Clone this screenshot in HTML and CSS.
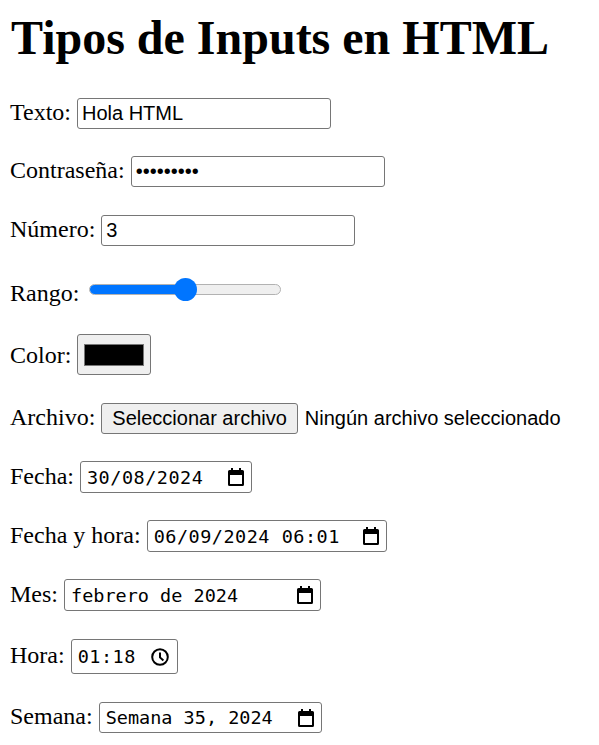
FILE: index.html
```html
<!DOCTYPE html>
<html lang="es">
<head>
<meta charset="utf-8">
<title>Tipos de Inputs en HTML</title>
<link rel="stylesheet" href="styles.css">
</head>
<body>
<h1>Tipos de Inputs en HTML</h1>

<div class="row r-texto">
  <span class="label">Texto:</span>
  <span class="field text">Hola HTML</span>
</div>

<div class="row r-pass">
  <span class="label">Contraseña:</span>
  <span class="field text pass">•••••••••</span>
</div>

<div class="row r-num">
  <span class="label">Número:</span>
  <span class="field text">3</span>
</div>

<div class="row r-range">
  <span class="label">Rango:</span>
  <span class="range"><span class="track"><span class="fill"></span></span><span class="thumb"></span></span>
</div>

<div class="row r-color">
  <span class="label">Color:</span>
  <span class="color"><span class="swatch"></span></span>
</div>

<div class="row r-file">
  <span class="label">Archivo:</span>
  <span class="filebtn">Seleccionar archivo</span>
  <span class="filename">Ningún archivo seleccionado</span>
</div>

<div class="row r-date">
  <span class="label">Fecha:</span>
  <span class="field dt w-date"><span class="val digits">30/08/2024</span>
    <svg class="cal" width="16" height="18" viewBox="0 0 16 18"><path fill-rule="evenodd" d="M3 0h2v2h6V0h2v2h1.5A1.5 1.5 0 0 1 16 3.5v13a1.5 1.5 0 0 1-1.5 1.5h-13A1.5 1.5 0 0 1 0 16.5v-13A1.5 1.5 0 0 1 1.5 2H3zM2 7v9h12V7z"/></svg></span>
</div>

<div class="row r-dtl">
  <span class="label">Fecha y hora:</span>
  <span class="field dt w-dtl"><span class="val digits">06/09/2024 06:01</span>
    <svg class="cal" width="16" height="18" viewBox="0 0 16 18"><path fill-rule="evenodd" d="M3 0h2v2h6V0h2v2h1.5A1.5 1.5 0 0 1 16 3.5v13a1.5 1.5 0 0 1-1.5 1.5h-13A1.5 1.5 0 0 1 0 16.5v-13A1.5 1.5 0 0 1 1.5 2H3zM2 7v9h12V7z"/></svg></span>
</div>

<div class="row r-month">
  <span class="label">Mes:</span>
  <span class="field dt w-month"><span class="val">febrero de 2024</span>
    <svg class="cal" width="16" height="18" viewBox="0 0 16 18"><path fill-rule="evenodd" d="M3 0h2v2h6V0h2v2h1.5A1.5 1.5 0 0 1 16 3.5v13a1.5 1.5 0 0 1-1.5 1.5h-13A1.5 1.5 0 0 1 0 16.5v-13A1.5 1.5 0 0 1 1.5 2H3zM2 7v9h12V7z"/></svg></span>
</div>

<div class="row r-time">
  <span class="label">Hora:</span>
  <span class="field dt w-time"><span class="val digits">01:18</span>
    <svg class="clock" width="18" height="18" viewBox="0 0 18 18"><circle cx="9" cy="9" r="7.8" fill="none" stroke="#000" stroke-width="2"/><path d="M9 4.5V9.4l3.4 3.2" fill="none" stroke="#000" stroke-width="2"/></svg></span>
</div>

<div class="row r-week">
  <span class="label">Semana:</span>
  <span class="field dt w-week"><span class="val">Semana 35, 2024</span>
    <svg class="cal" width="16" height="18" viewBox="0 0 16 18"><path fill-rule="evenodd" d="M3 0h2v2h6V0h2v2h1.5A1.5 1.5 0 0 1 16 3.5v13a1.5 1.5 0 0 1-1.5 1.5h-13A1.5 1.5 0 0 1 0 16.5v-13A1.5 1.5 0 0 1 1.5 2H3zM2 7v9h12V7z"/></svg></span>
</div>
</body>
</html>
```

FILE: styles.css
```css
html, body {
  background: #ffffff;
}

body {
  margin: 0;
  padding: 10px 10px 0 10px;
  font-family: "Liberation Serif", "Times New Roman", serif;
  font-size: 24px;
  color: #000000;
}

h1 {
  font-size: 48px;
  font-weight: bold;
  line-height: normal;
  margin: 0 0 33px 0;
  padding-left: 1px;
}

.row {
  display: flex;
  align-items: baseline;
  gap: 6px;
  white-space: nowrap;
}

.label {
  line-height: 28px;
}

.r-pass { margin-top: 27px; }
.r-num { margin-top: 28px; }
.r-range { margin-top: 31px; align-items: flex-end; }
.r-color { margin-top: 27px; align-items: center; }
.r-file { margin-top: 28px; }
.r-date { margin-top: 27px; }
.r-dtl { margin-top: 27px; }
.r-month { margin-top: 27px; }
.r-time { margin-top: 28px; }
.r-week { margin-top: 28px; }

.field {
  box-sizing: border-box;
  display: flex;
  align-items: center;
  height: 31px;
  border: 1px solid #767676;
  border-radius: 3px;
  background: #ffffff;
  color: #000000;
  font-family: "Liberation Sans", Arial, sans-serif;
  font-size: 20px;
  line-height: normal;
}

.text {
  width: 254px;
  padding: 0 4px;
}

.pass {
  font-size: 20px;
}

.dt {
  justify-content: space-between;
  height: 32px;
  padding: 0 7px 0 6px;
  font-family: "DejaVu Sans Mono", "Liberation Mono", monospace;
  font-size: 18.5px;
}

.dt .digits {
  letter-spacing: 0.5px;
}

.w-date { width: 172px; }
.w-dtl { width: 240px; }
.w-month { width: 257px; }
.w-time { width: 107px; height: 35px; padding-right: 8px; }
.w-week { width: 223px; height: 31px; }

.cal {
  flex: none;
  fill: #000000;
}

.clock {
  flex: none;
}

/* range */
.range {
  position: relative;
  display: flex;
  align-items: center;
  width: 192px;
  height: 24px;
  margin: 0 0 6px 4px;
}

.track {
  display: block;
  box-sizing: border-box;
  width: 100%;
  height: 11px;
  border: 1px solid #b2b2b2;
  border-radius: 6px;
  background: #efefef;
  overflow: hidden;
}

.fill {
  display: block;
  width: 50%;
  height: 100%;
  background: #0075ff;
}

.thumb {
  position: absolute;
  left: 85px;
  top: 0.5px;
  width: 23px;
  height: 23px;
  border-radius: 50%;
  background: #0075ff;
}

/* color */
.color {
  box-sizing: border-box;
  display: flex;
  align-items: center;
  justify-content: center;
  width: 74px;
  height: 41px;
  border: 1px solid #767676;
  border-radius: 3px;
  background: #efefef;
}

.swatch {
  box-sizing: border-box;
  display: block;
  width: 60px;
  height: 22px;
  border: 1px solid #777777;
  background: #000000;
}

/* file */
.filebtn {
  box-sizing: border-box;
  display: flex;
  align-items: center;
  height: 31px;
  padding: 0 10px;
  border: 1px solid #767676;
  border-radius: 3px;
  background: #efefef;
  font-family: "Liberation Sans", Arial, sans-serif;
  font-size: 20px;
  line-height: normal;
}

.filename {
  margin-left: 1px;
  font-family: "Liberation Sans", Arial, sans-serif;
  font-size: 20px;
}
```
